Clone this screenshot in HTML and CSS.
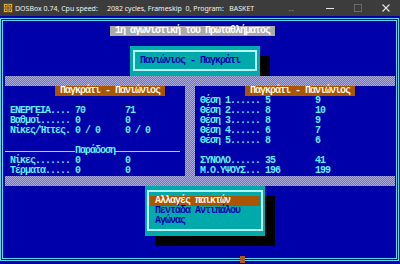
FILE: index.html
```html
<!DOCTYPE html>
<html lang="el">
<head>
  <meta charset="UTF-8">
  <title>DOSBox – BASKET</title>
  <link rel="stylesheet" href="styles.css">
</head>
<body>

  <div class="title-bar">
    <svg class="app-icon" width="10" height="10" viewBox="0 0 10 10">
      <rect width="10" height="10" fill="#6b4a12"/>
      <rect x="1" y="1" width="3.5" height="3.5" fill="#e0b040"/>
      <rect x="5.5" y="1" width="3.5" height="3.5" fill="#e0b040"/>
      <rect x="1" y="5.5" width="3.5" height="3.5" fill="#e0b040"/>
      <rect x="5.5" y="5.5" width="3.5" height="3.5" fill="#e0b040"/>
      <rect x="2" y="2" width="1.5" height="1.5" fill="#5a3a08"/>
      <rect x="6.5" y="2" width="1.5" height="1.5" fill="#5a3a08"/>
      <rect x="2" y="6.5" width="1.5" height="1.5" fill="#5a3a08"/>
      <rect x="6.5" y="6.5" width="1.5" height="1.5" fill="#5a3a08"/>
    </svg>
    <span class="title-text">DOSBox 0.74, Cpu speed:     2082 cycles, Frameskip  0, Program:   BASKET</span>
    <span class="resize-mark">↔</span>
    <div class="controls">
      <span class="ctl"><span class="min-line"></span></span>
      <span class="ctl"><span class="max-box"></span></span>
      <span class="ctl">
        <svg width="8" height="8" viewBox="0 0 8 8">
          <path d="M0.5 0.5 L7.5 7.5 M7.5 0.5 L0.5 7.5" stroke="#e6e6e6" stroke-width="1.1"/>
        </svg>
      </span>
    </div>
  </div>

  <div class="screen">
    <div class="frame">

      <div class="round-title"> 1η αγωνιστική του Πρωταθλήματος </div>

      <div class="match-box">
        <div class="box-frame">Πανιώνιος - Παγκράτι</div>
      </div>

      <div class="band"></div>

      <div class="stats">
        <div class="col">
          <div class="team-label"> Παγκράτι - Πανιώνιος </div>
          <div class="blank"></div>
          <div class="row">ΕΝΕΡΓΕΙΑ.... 70        71</div>
          <div class="row">Βαθμοί...... 0         0</div>
          <div class="row">Νίκες/Ήττες. 0 / 0     0 / 0</div>
          <div class="blank"></div>
          <div class="history">
            <span class="rule rule-left"></span>
            <span>Παράδοση</span>
            <span class="rule rule-right"></span>
          </div>
          <div class="row">Νίκες....... 0         0</div>
          <div class="row">Τέρματα..... 0         0</div>
        </div>

        <div class="divider"></div>

        <div class="col col-right">
          <div class="team-label"> Παγκράτι - Πανιώνιος </div>
          <div class="row">Θέση 1...... 5         9</div>
          <div class="row">Θέση 2...... 8         10</div>
          <div class="row">Θέση 3...... 8         9</div>
          <div class="row">Θέση 4...... 6         7</div>
          <div class="row">Θέση 5...... 8         6</div>
          <div class="blank"></div>
          <div class="row">ΣΥΝΟΛΟ...... 35        41</div>
          <div class="row">Μ.Ο.ΥΨΟΥΣ... 196       199</div>
        </div>
      </div>

      <div class="band"></div>

      <div class="menu">
        <div class="box-frame menu-frame">
          <div class="menu-item active">Αλλαγές παικτών</div>
          <div class="menu-item">Πεντάδα Αντιπάλου</div>
          <div class="menu-item">Αγώνας</div>
        </div>
      </div>

    </div>
    <span class="cursor"></span>
  </div>

</body>
</html>
```

FILE: styles.css
```css
body {
  margin: 0;
  width: 400px;
  height: 264px;
  overflow: hidden;
  background: #0000aa;
}

/* window title bar */
.title-bar {
  height: 16px;
  background: #3c3c3c;
  display: flex;
  align-items: center;
  color: #f0f0f0;
  font-family: "Noto Sans", sans-serif;
  font-size: 7px;
}
.app-icon {
  margin-left: 3px;
  flex-shrink: 0;
}
.title-text {
  margin-left: 2px;
  white-space: pre;
}
.resize-mark {
  margin-left: auto;
  color: #8a8a8a;
  font-size: 8px;
  margin-right: 21px;
}
.controls {
  display: flex;
}
.ctl {
  width: 28px;
  height: 16px;
  display: flex;
  align-items: center;
  justify-content: center;
}
.min-line {
  width: 8px;
  height: 1px;
  background: #e6e6e6;
}
.max-box {
  width: 6px;
  height: 6px;
  border: 1px solid #6a6a6a;
}

/* dos screen */
.screen {
  position: relative;
  height: 248px;
  padding-top: 2px;
  box-sizing: border-box;
  background: #0000aa;
  font-family: "Liberation Mono", "DejaVu Sans Mono", monospace;
  font-size: 10px;
  font-weight: bold;
  letter-spacing: -1px;
  line-height: 10px;
  color: #5ff0ff;
}
.frame {
  height: 243px;
  margin-right: 1px;
  box-sizing: border-box;
  border: 3px double #5ad6f6;
}

.round-title {
  width: max-content;
  height: 10px;
  margin: 5px 0 10px 107px;
  background: #aaaaaa;
  color: #ffffff;
  white-space: pre;
}

.match-box {
  width: 130px;
  height: 30px;
  margin-left: 127px;
  padding: 4px 3px 5px;
  box-sizing: border-box;
  background: #00aaaa;
  box-shadow: 10px 10px 0 #000;
}
.box-frame {
  height: 100%;
  box-sizing: border-box;
  border: 2px solid #b8f6f6;
  padding: 4px 0 0 5px;
  color: #0000aa;
}

.band {
  height: 10px;
  margin: 0 1px 0 2px;
  background: repeating-conic-gradient(#ababdd 0 25%, #7070c4 0 50%) 0 0 / 2px 2px;
}

.stats {
  display: flex;
  height: 90px;
  margin: 0 1px 0 2px;
}
.col {
  width: 180px;
}
.col-right {
  flex: 1;
}
.divider {
  width: 10px;
  background: repeating-conic-gradient(#ababdd 0 25%, #7070c4 0 50%) 0 0 / 2px 2px;
}
.team-label {
  width: max-content;
  height: 10px;
  margin-left: 50px;
  background: #aa5500;
  color: #fff4e4;
  white-space: pre;
}
.row {
  height: 10px;
  padding-left: 5px;
  white-space: pre;
}
.blank {
  height: 10px;
}
.history {
  display: flex;
  align-items: center;
  height: 10px;
}
.rule {
  border-top: 1px solid #5ff0ff;
}
.rule-left {
  width: 70px;
}
.rule-right {
  width: 65px;
}

.menu {
  width: 120px;
  height: 50px;
  margin-left: 142px;
  padding: 4px 2px 5px;
  box-sizing: border-box;
  background: #00aaaa;
  box-shadow: 10px 10px 0 #000;
}
.menu-frame {
  padding: 4px 0 0 1px;
}
.menu-item {
  width: 110px;
  height: 10px;
  padding-left: 5px;
  box-sizing: border-box;
  color: #0000aa;
  white-space: pre;
}
.menu-item.active {
  background: #aa5500;
  color: #fff4e4;
}

.cursor {
  position: absolute;
  left: 240px;
  top: 240px;
  width: 5px;
  height: 7px;
  background: #b05a20;
}
```
